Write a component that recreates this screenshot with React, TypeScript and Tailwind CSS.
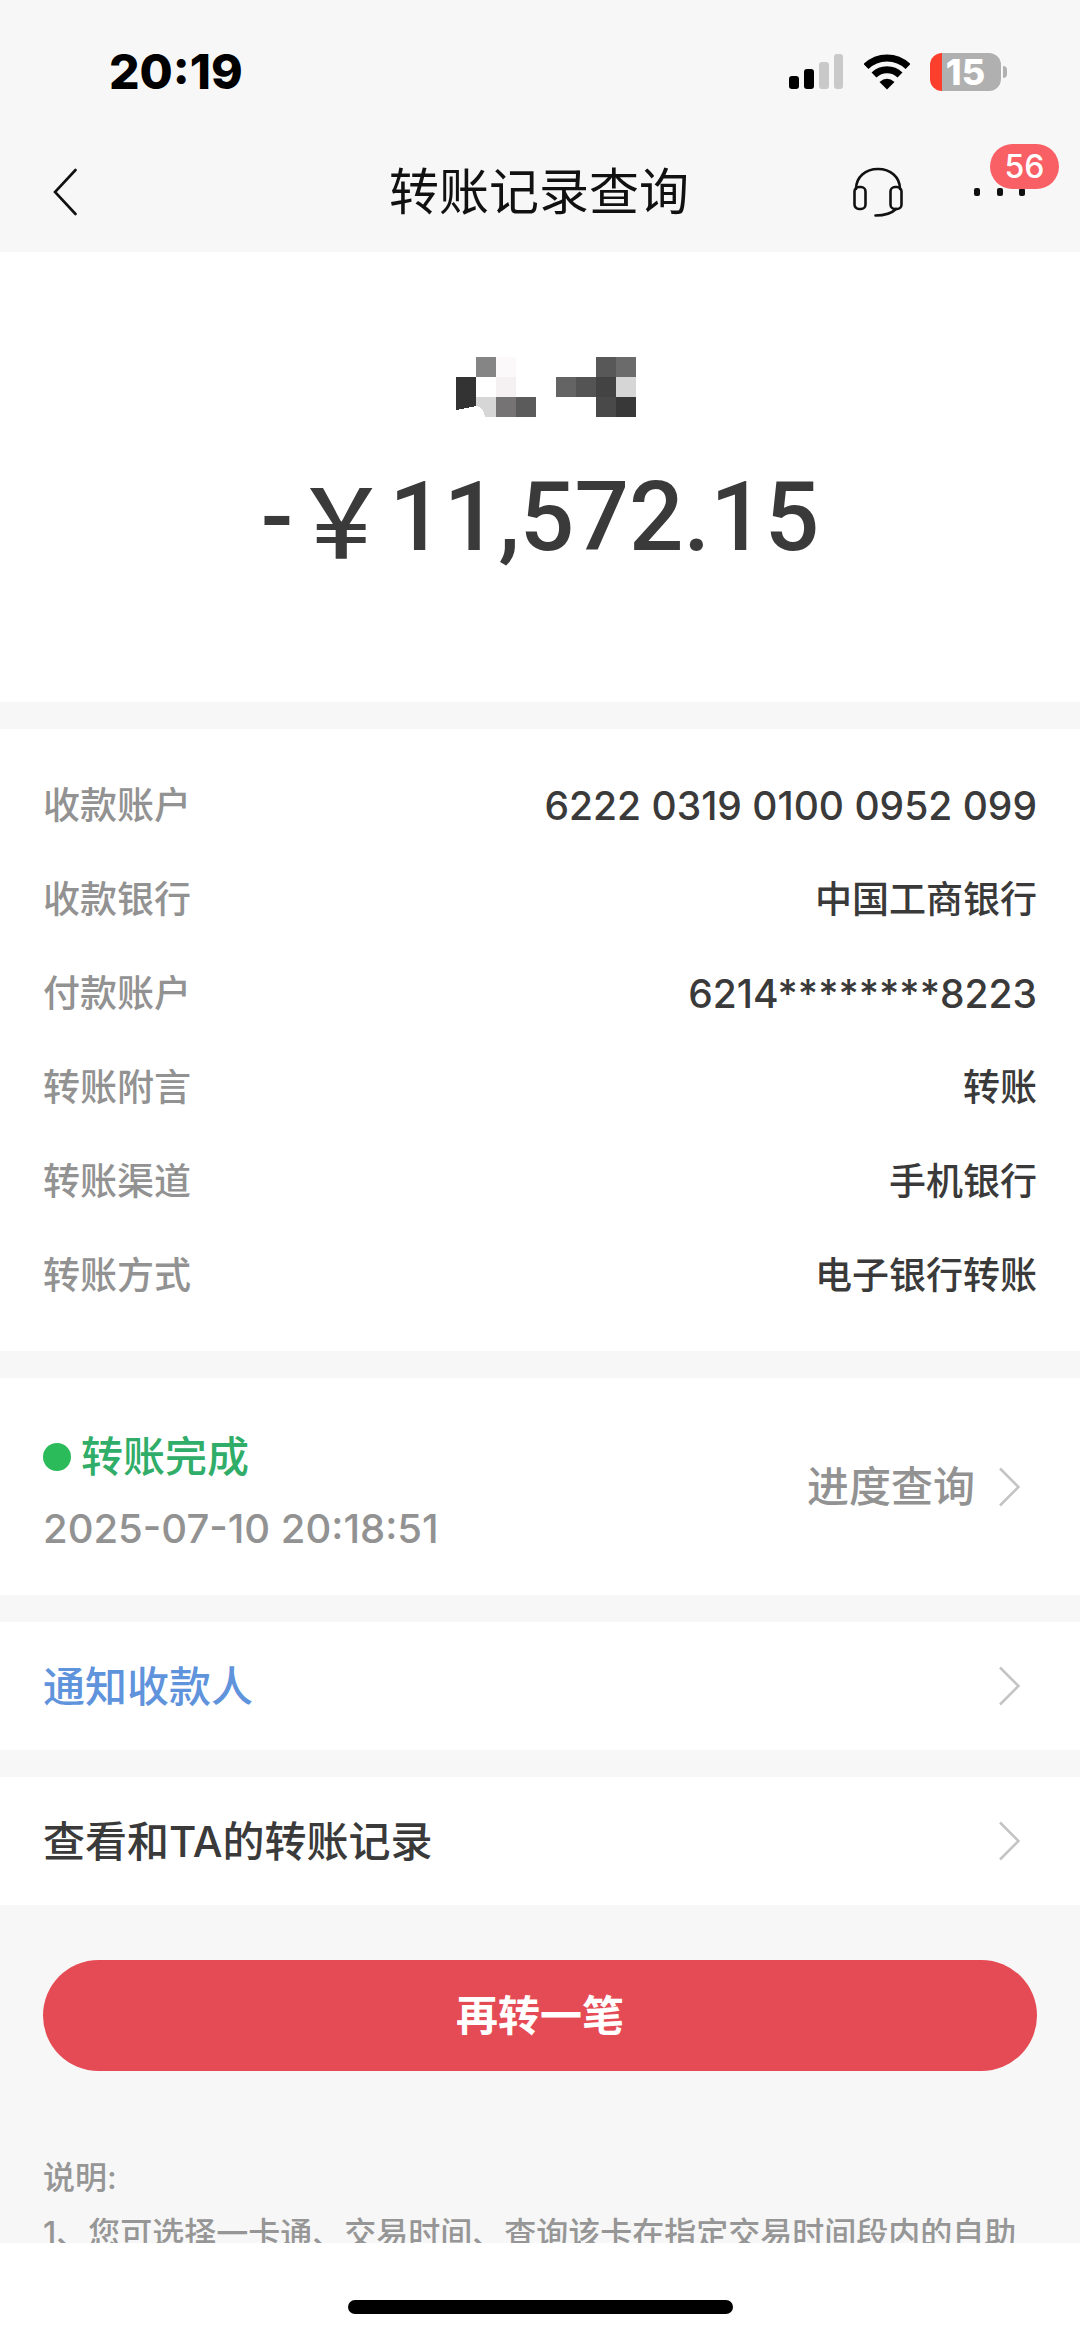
const details = [
  { label: "收款账户", value: "6222 0319 0100 0952 099" },
  { label: "收款银行", value: "中国工商银行" },
  { label: "付款账户", value: "6214********8223" },
  { label: "转账附言", value: "转账" },
  { label: "转账渠道", value: "手机银行" },
  { label: "转账方式", value: "电子银行转账" },
];

// [column, row, fill] of the blocks covering the payee name
const mosaic: [number, number, string][] = [
  [1, 0, "#858585"],
  [2, 0, "#fcf9fa"],
  [7, 0, "#585858"],
  [8, 0, "#6b6b6b"],
  [2, 1, "#f5f1f2"],
  [5, 1, "#646464"],
  [6, 1, "#545454"],
  [7, 1, "#434343"],
  [8, 1, "#d6d6d6"],
  [2, 2, "#767374"],
  [3, 2, "#5b5b5b"],
  [7, 2, "#494949"],
  [8, 2, "#383838"],
];

function ChevronRight() {
  return (
    <svg className="h-10 w-[22px]" viewBox="0 0 22 40" fill="none" stroke="#c4c4c4" strokeWidth="2.5" aria-hidden="true">
      <path d="M1 1.5 19.5 20 1 38.5" />
    </svg>
  );
}

function StatusBar() {
  return (
    <div className="flex h-32 items-center justify-between pt-4 pr-[73px] pl-[109px]">
      <span className="text-[48px] leading-none font-extrabold text-black">20:19</span>
      <div className="flex items-center gap-5">
        <svg className="h-9 w-[55px]" viewBox="0 0 55 36" aria-hidden="true">
          <rect x="0" y="22" width="10" height="13" rx="3" />
          <rect x="15" y="15" width="10" height="20" rx="3" />
          <rect x="30" y="8" width="10" height="27" rx="3" fill="#c9c9c9" />
          <rect x="45" y="0" width="9" height="35" rx="3" fill="#c9c9c9" />
        </svg>
        <svg className="h-9 w-[46px]" viewBox="0 0 46 36" fill="none" stroke="#000" aria-hidden="true">
          <path d="M2 12.5A30 30 0 0 1 44 12.5" strokeWidth="7" />
          <path d="M10 21A18.5 18.5 0 0 1 36 21" strokeWidth="7" />
          <path d="M23 35.5 15.5 28Q23 21.5 30.5 28Z" fill="#000" stroke="none" />
        </svg>
        <div className="flex items-center gap-0.5">
          <div className="flex h-[38px] w-[71px] items-center justify-center rounded-[12px] bg-[linear-gradient(to_right,#fb3f2c_12px,#b0b0b0_12px)]">
            <span className="text-[36px] leading-none font-extrabold text-white">15</span>
          </div>
          <div className="h-3 w-1 rounded-r-full bg-[#b0b0b0]" />
        </div>
      </div>
    </div>
  );
}

function NavBar() {
  return (
    <div className="grid h-[124px] grid-cols-[1fr_auto_1fr] items-center pt-1 pr-[55px] pl-[53px]">
      <button type="button" aria-label="返回" className="justify-self-start">
        <svg className="h-12 w-6" viewBox="0 0 24 48" fill="none" stroke="#111" strokeWidth="2.6" strokeLinecap="round">
          <path d="M22.5 2 2 24 22.5 46" />
        </svg>
      </button>
      <h1 className="text-[50px] leading-none text-[#111]">转账记录查询</h1>
      <div className="flex items-center gap-[71px] justify-self-end">
        <button type="button" aria-label="客服">
          <svg className="h-[50px] w-[50px]" viewBox="0 0 50 50" fill="none" stroke="#111" strokeWidth="2.6" strokeLinecap="round">
            <path d="M3 22C3 10 12.5 2 25 2S47 10 47 22" />
            <rect x="1.5" y="20" width="11" height="22" rx="4.5" />
            <rect x="37.5" y="20" width="11" height="22" rx="4.5" />
            <path d="M43 42C38 47 32 48.5 22.5 48.5" />
          </svg>
        </button>
        <button type="button" aria-label="更多" className="relative flex h-12 w-[51px] items-center justify-between">
          <span className="h-2 w-1.5 rounded-xs bg-[#111]" />
          <span className="h-2 w-1.5 rounded-xs bg-[#111]" />
          <span className="h-2 w-1.5 rounded-xs bg-[#111]" />
          <span className="absolute -top-6 left-4 flex h-[45px] w-[69px] items-center justify-center rounded-full bg-[#f96065] text-[32px] leading-none font-medium text-white">
            56
          </span>
        </button>
      </div>
    </div>
  );
}

export default function App() {
  return (
    <div className="flex h-screen flex-col bg-[#f7f7f7] font-['Inter','Noto_Sans_CJK_SC',sans-serif] text-[#3a3a3a]">
      <header>
        <StatusBar />
        <NavBar />
      </header>

      <main className="min-h-0 flex-1 overflow-hidden">
        {/* Payee and amount */}
        <section className="flex h-[450px] flex-col items-center bg-white pt-[105px]">
          <svg className="ml-3 h-[60px] w-[180px]" viewBox="0 0 180 60" shapeRendering="crispEdges" aria-hidden="true">
            {mosaic.map(([col, row, fill]) => (
              <rect key={`${col}-${row}`} x={col * 20} y={row * 20} width="20" height="20" fill={fill} />
            ))}
            <path d="M0 20H20V49L0 53Z" fill="#333" />
            <path d="M20 40H40V60H29Q27 49 20 49Z" fill="#d6d6d6" />
          </svg>
          <p className="mt-11 flex font-['Roboto','Noto_Sans_CJK_SC',sans-serif] text-[96px] leading-[112px] font-medium">
            <span>-</span>
            <span className="font-['Noto_Sans_CJK_SC',sans-serif]">￥</span>
            <span>11,572.15</span>
          </p>
        </section>

        {/* Transfer details */}
        <section className="mt-[27px] bg-white px-[43px] pt-[30px] pb-7">
          <dl className="text-[37px] font-medium">
            {details.map((item) => (
              <div key={item.label} className="flex h-[94px] items-center justify-between">
                <dt className="text-[#929292]">{item.label}</dt>
                <dd className={/^\d/.test(item.value) ? "text-[39px]" : ""}>{item.value}</dd>
              </div>
            ))}
          </dl>
        </section>

        {/* Status */}
        <section className="mt-[27px] flex h-[217px] items-center justify-between bg-white pr-[59px] pl-[43px]">
          <div className="pt-3">
            <div className="flex items-center gap-2.5">
              <span className="size-7 rounded-full bg-[#2bbb5b]" />
              <span className="text-[42px] leading-[72px] font-medium text-[#30ad68]">转账完成</span>
            </div>
            <time className="block text-[40px] leading-[72px] font-medium text-[#929292]">2025-07-10 20:18:51</time>
          </div>
          <a href="#progress" className="flex items-center gap-6 text-[42px] font-medium text-[#929292]">
            进度查询
            <ChevronRight />
          </a>
        </section>

        <a href="#notify" className="mt-[27px] flex h-32 items-center justify-between bg-white pr-[59px] pl-[43px] text-[42px] font-medium text-[#5f93dc]">
          通知收款人
          <ChevronRight />
        </a>

        <a href="#records" className="mt-[27px] flex h-32 items-center justify-between bg-white pr-[59px] pl-[43px] text-[42px] font-medium">
          查看和TA的转账记录
          <ChevronRight />
        </a>

        <div className="px-[43px] pt-[55px]">
          <button type="button" className="h-[111px] w-full rounded-full bg-[#e54b55] text-[42px] font-bold text-white">
            再转一笔
          </button>
          <div className="mt-[79px] text-[32px] leading-[56px] font-medium text-[#969696]">
            <p>说明:</p>
            <p>1、您可选择一卡通、交易时间、查询该卡在指定交易时间段内的自助</p>
          </div>
        </div>
      </main>

      <footer className="flex h-[95px] items-end justify-center bg-white pb-6">
        <div className="h-3.5 w-[385px] rounded-full bg-black" />
      </footer>
    </div>
  );
}
